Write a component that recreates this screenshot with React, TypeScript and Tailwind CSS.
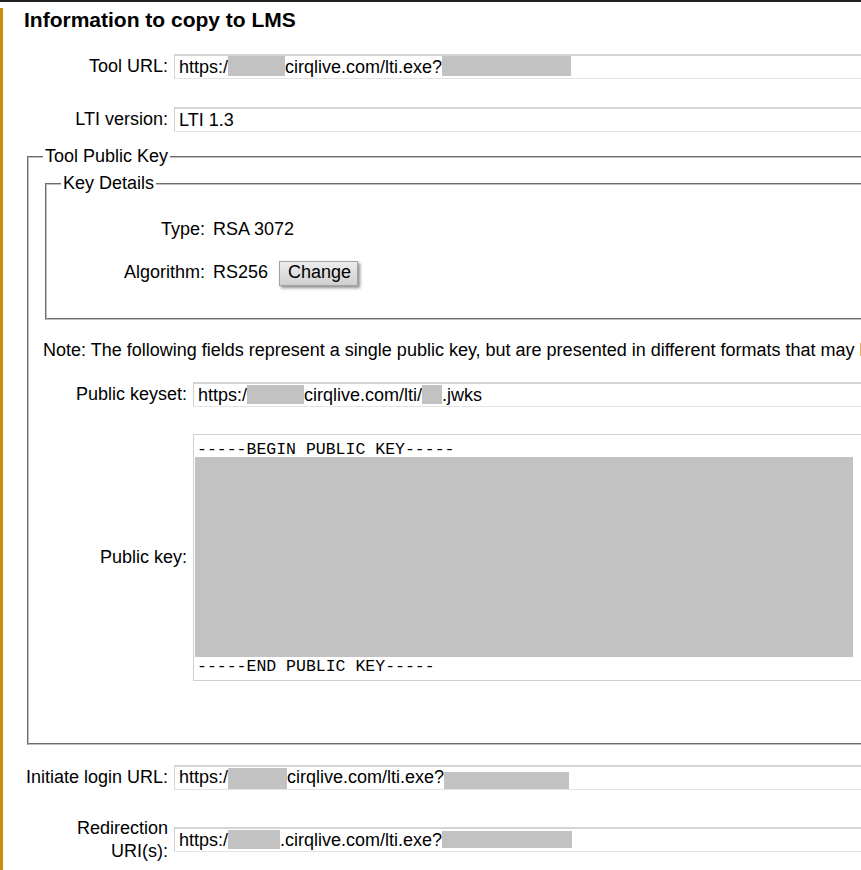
import React from 'react';

type RowProps = {
  label: React.ReactNode;
  children: React.ReactNode;
  className?: string;
};

function Row({ label, children, className = '' }: RowProps) {
  return (
    <div className={`flex items-center ${className}`}>
      <div className="w-[144px] shrink-0 text-right">{label}</div>
      {children}
    </div>
  );
}

function Field({ children }: { children: React.ReactNode }) {
  return (
    <div className="ml-[6px] flex h-[25px] w-[720px] shrink-0 items-center whitespace-nowrap border border-[#d2d2d2] border-t-2 border-t-[#d4d4d4] border-b-[#e4e4e4] pl-[4px]">
      {children}
    </div>
  );
}

// grey box standing in for the redacted part of a value
function Blur({ className }: { className: string }) {
  return <span className={`inline-block shrink-0 self-start bg-[#c2c2c2] ${className}`} />;
}

export default function App() {
  return (
    <div className="h-[870px] w-full overflow-hidden bg-white font-['Liberation_Sans',Arial,sans-serif] text-[18px] leading-[23px] text-black">
      <div className="h-[2px] bg-[#1f1f1f]" />

      <div className="h-[868px] w-[1100px] border-l-[3px] border-[#cc8b0c] pl-[21px]">
        <h3 className="mt-[6px] text-[21px] font-bold leading-[24px]">Information to copy to LMS</h3>

        <Row label="Tool URL:" className="mt-[22px]">
          <Field>
            https:/
            <Blur className="h-[20px] w-[57px]" />
            cirqlive.com/lti.exe?
            <Blur className="h-[20px] w-[129px]" />
          </Field>
        </Row>

        <Row label="LTI version:" className="mt-[28px]">
          <Field>LTI 1.3</Field>
        </Row>

        <fieldset className="ml-[3px] mt-[13px] w-[1000px] border-2 border-[#c0c0c0] pb-[62px] pl-[14px] pt-[4px] [border-style:groove]">
          <legend className="px-[2px]">Tool Public Key</legend>

          <fieldset className="ml-[2px] border-2 border-[#c0c0c0] pb-[32px] pl-[14px] pt-[23px] [border-style:groove]">
            <legend className="px-[2px]">Key Details</legend>

            <div className="flex items-baseline">
              <div className="w-[144px] shrink-0 text-right">Type:</div>
              <div className="ml-[8px]">RSA 3072</div>
            </div>

            <div className="mt-[20px] flex items-baseline">
              <div className="w-[144px] shrink-0 text-right">Algorithm:</div>
              <div className="ml-[8px]">RS256</div>
              <button
                type="button"
                className="ml-[11px] border border-[#a3a3a3] bg-linear-to-b from-[#ececec] to-[#d0d0d0] pb-[3px] pl-[8px] pr-[6px] pt-0 leading-[20px] shadow-[2px_2px_3px_rgba(0,0,0,0.45)]"
              >
                Change
              </button>
            </div>
          </fieldset>

          <div className="mt-[19px] whitespace-nowrap">
            Note: The following fields represent a single public key, but are presented in different formats that may
            be required by different LMSs.
          </div>

          <Row label="Public keyset:" className="mt-[20px]">
            <Field>
              https:/
              <Blur className="mt-[1px] h-[19px] w-[57px]" />
              cirqlive.com/lti/
              <Blur className="mt-[1px] h-[19px] w-[20px]" />
              .jwks
            </Field>
          </Row>

          <Row label="Public key:" className="mt-[27px]">
            <div className="ml-[6px] w-[720px] shrink-0 border border-[#d0d0d0] pb-[3px] pl-[3px] pt-[8px] font-['Liberation_Mono','DejaVu_Sans_Mono',monospace] text-[16.5px] leading-[18.7px]">
              <div className="leading-[14px]">-----BEGIN PUBLIC KEY-----</div>
              <div className="-ml-[2px] h-[200px] w-[658px] bg-[#c2c2c2]" />
              <div className="pt-[1px]">-----END PUBLIC KEY-----</div>
            </div>
          </Row>
        </fieldset>

        <Row label="Initiate login URL:" className="mt-[20px]">
          <Field>
            https:/
            <Blur className="mt-[1px] h-[21px] w-[59px]" />
            cirqlive.com/lti.exe?
            <Blur className="mt-[5px] h-[17px] w-[125px]" />
          </Field>
        </Row>

        <Row label="Redirection URI(s):" className="mt-[27px]">
          <Field>
            https:/
            <Blur className="mt-[1px] h-[19px] w-[52px]" />
            .cirqlive.com/lti.exe?
            <Blur className="mt-[2px] h-[17px] w-[130px]" />
          </Field>
        </Row>
      </div>
    </div>
  );
}
